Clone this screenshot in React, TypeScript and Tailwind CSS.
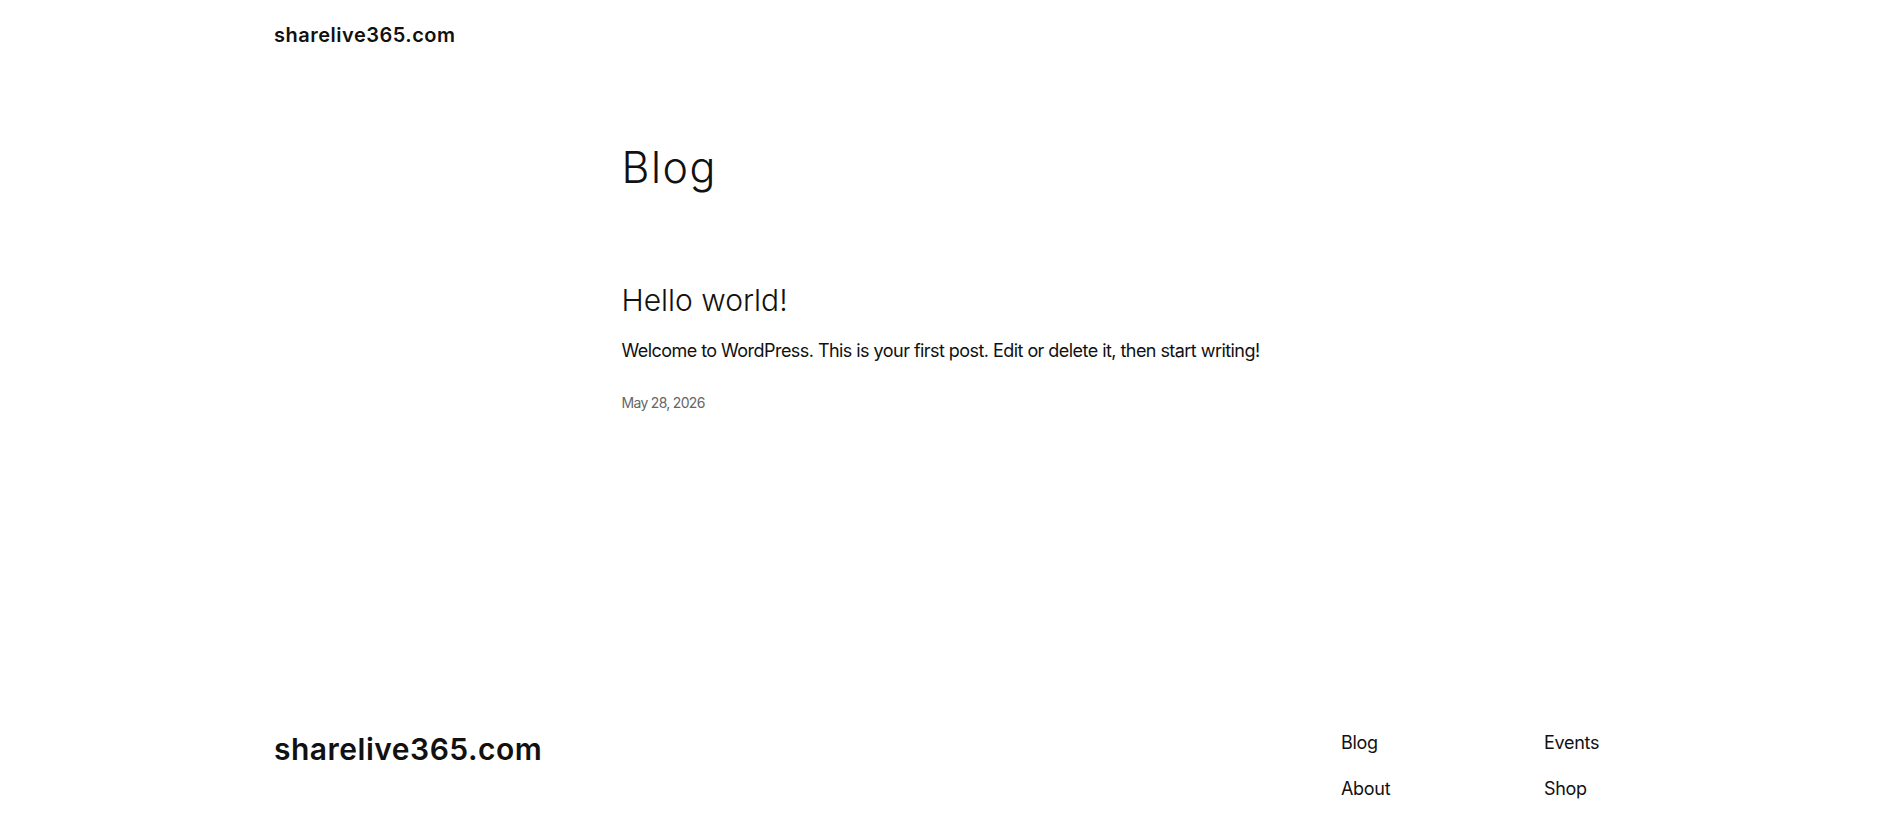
import React from "react";

const font = { fontFamily: "Inter, 'Noto Sans', sans-serif" };

const footerLinks = ["Blog", "Events", "About", "Shop"];

const Header = () => (
  <header className="px-[274px] pt-[21px]">
    <a className="block text-[20px] leading-[28px] font-semibold tracking-[0.5px] text-[#111111]">
      sharelive365.com
    </a>
  </header>
);

const Post = () => (
  <article className="mt-[89px]">
    <h2 className="text-[30px] leading-[36px] font-light text-[#111111]">Hello world!</h2>
    <p className="mt-[19px] whitespace-nowrap text-[18px] leading-[27px] tracking-[-0.55px] text-[#111111]">
      Welcome to WordPress. This is your first post. Edit or delete it, then start writing!
    </p>
    <p className="mt-[29px] text-[14px] leading-[20px] tracking-[-0.7px] text-[#666666]">
      May 28, 2026
    </p>
  </article>
);

const Footer = () => (
  <footer className="mt-[316px] px-[274px] flex items-start justify-between">
    <a className="block mt-[2px] text-[30px] leading-[36px] font-semibold tracking-[0.5px] text-[#111111]">
      sharelive365.com
    </a>
    <nav className="grid grid-cols-[203px_70px] gap-y-[19px]">
      {footerLinks.map((l) => (
        <a key={l} className="text-[18px] leading-[27px] tracking-[-0.3px] text-[#111111]">
          {l}
        </a>
      ))}
    </nav>
  </footer>
);

export default function App() {
  return (
    <div className="min-h-screen bg-white" style={font}>
      <Header />
      <main className="mx-auto w-[645px] pt-[92px]">
        <h1 className="text-[43px] leading-[52px] font-light tracking-[1.5px] text-[#111111]">Blog</h1>
        <Post />
      </main>
      <Footer />
    </div>
  );
}
